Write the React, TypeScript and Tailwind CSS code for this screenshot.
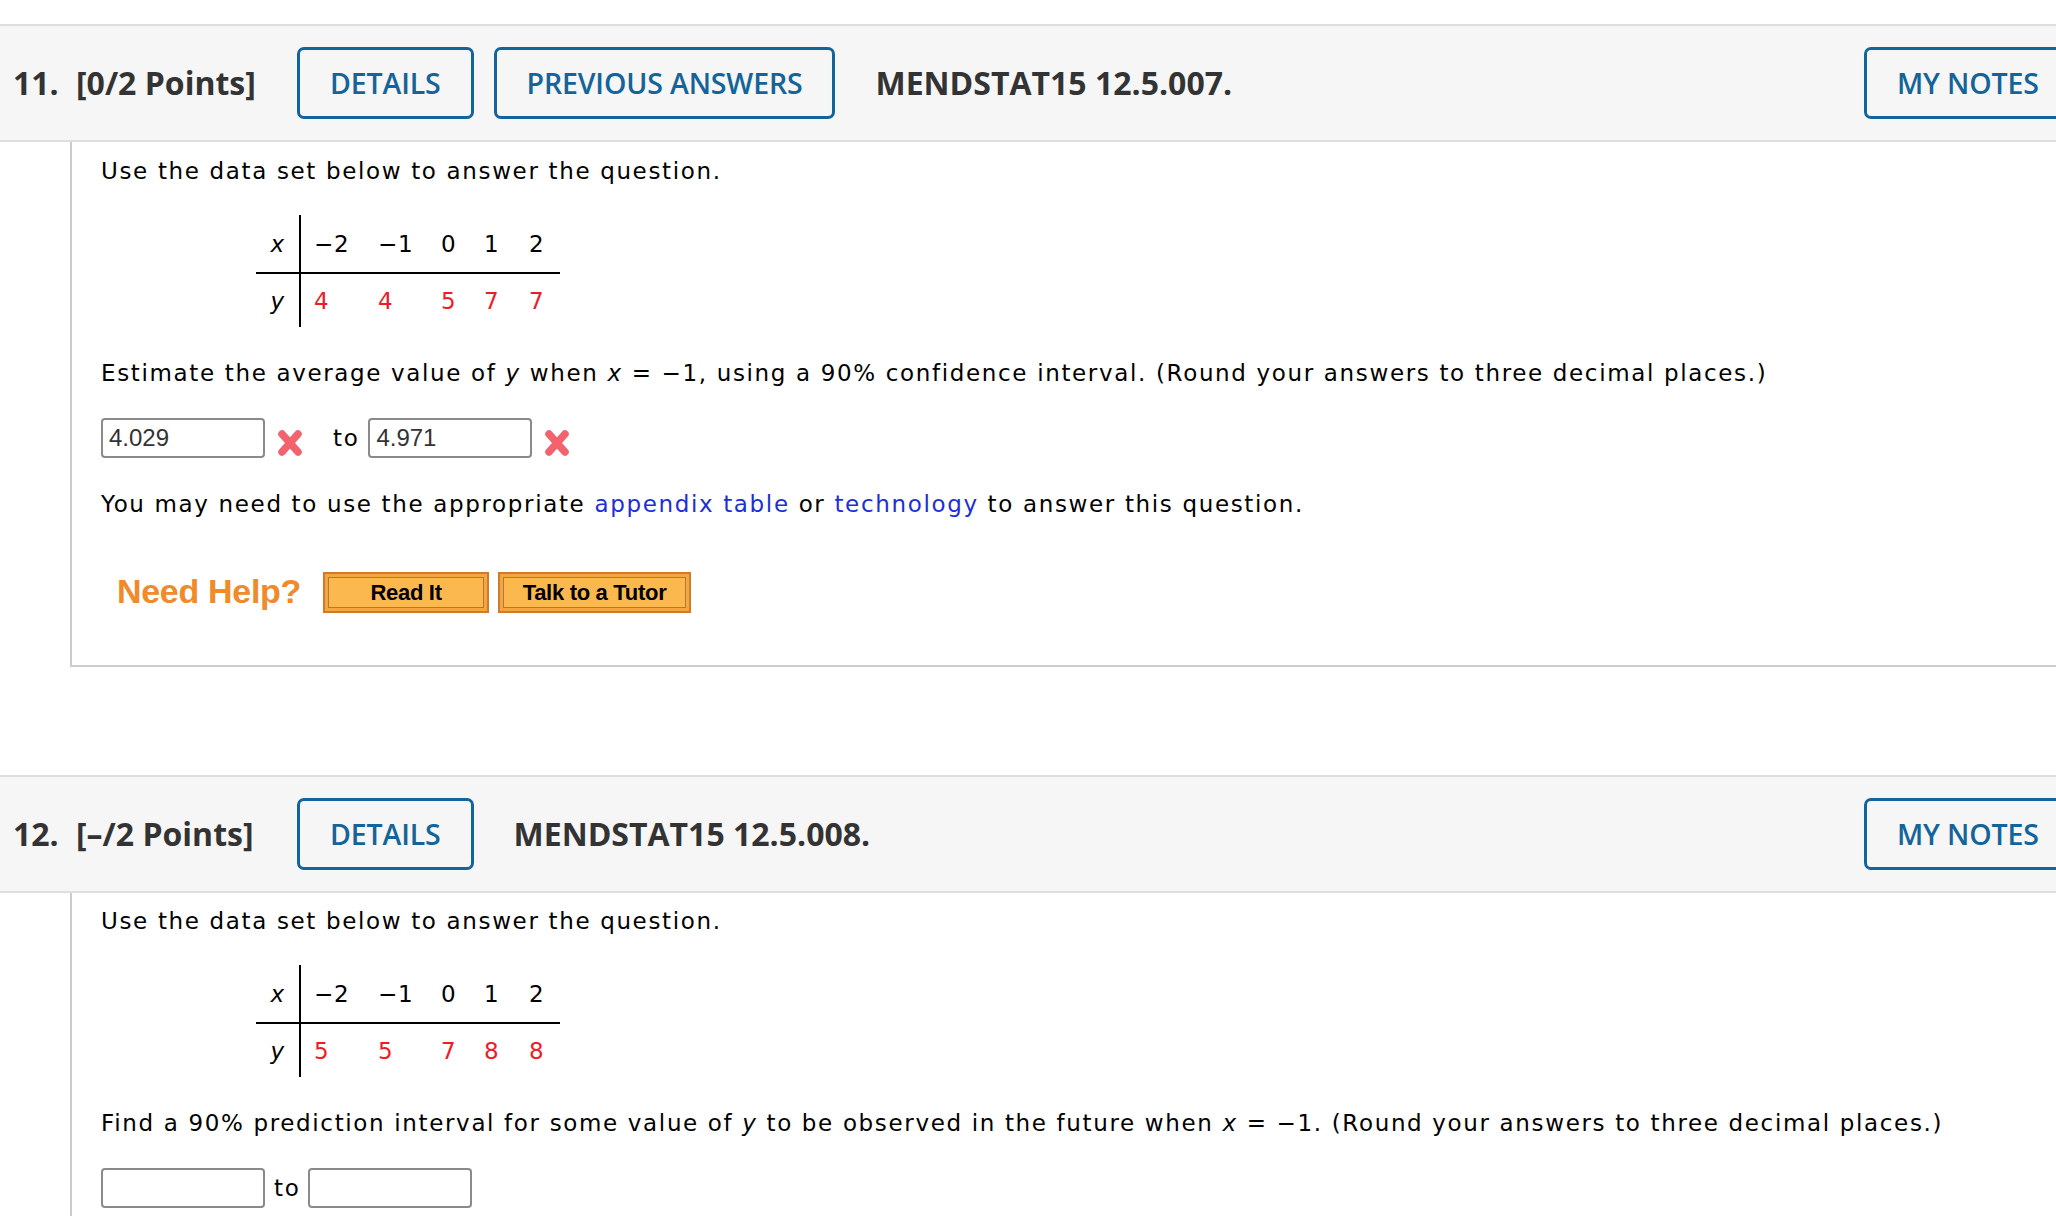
import React from "react";

const body = { fontFamily: '"DejaVu Sans", Verdana, sans-serif' };
const head = { fontFamily: '"Open Sans", "Liberation Sans", sans-serif' };
const arial = { fontFamily: '"Liberation Sans", Arial, sans-serif' };

function HeadButton({ children }: { children: React.ReactNode }) {
  return (
    <div
      className="h-[72px] px-[30px] flex items-center border-[3px] border-[#13649a] rounded-[7px] text-[#13649a] text-[28.5px] font-semibold tracking-[-0.15px] whitespace-nowrap"
      style={head}
    >
      {children}
    </div>
  );
}

function Header({ num, pts, prev, code }: { num: string; pts: string; prev: boolean; code: string }) {
  return (
    <div className="h-[118px] bg-[#f6f6f6] border-y-2 border-[#dedede] flex items-center pl-[13px]" style={head}>
      <span className="text-[32px] font-bold text-[#333] w-[63px]">{num}</span>
      <span className="text-[32px] font-bold text-[#333] w-[221px] whitespace-nowrap">{pts}</span>
      <HeadButton>DETAILS</HeadButton>
      {prev && (
        <div className="ml-[20px]">
          <HeadButton>PREVIOUS ANSWERS</HeadButton>
        </div>
      )}
      <span className="ml-[40px] text-[32px] font-bold text-[#333] whitespace-nowrap">{code}</span>
      <div className="ml-auto -mr-[40px] w-[232px]">
        <HeadButton>MY NOTES</HeadButton>
      </div>
    </div>
  );
}

function DataTable({ ys }: { ys: string[] }) {
  const xs = ["\u22122", "\u22121", "0", "1", "2"];
  const widths = ["w-[64px]", "w-[63px]", "w-[43px]", "w-[45px]", "w-[30px]"];
  return (
    <div className="ml-[155px] w-[304px] text-[23px] tracking-[0.8px] text-black" style={body}>
      <div className="flex h-[57px]">
        <div className="w-[43px] pr-[14px] flex items-center justify-end italic">x</div>
        <div className="flex-1 border-l-2 border-black flex items-center pl-[13px]">
          {xs.map((v, i) => (
            <span key={i} className={widths[i]}>{v}</span>
          ))}
        </div>
      </div>
      <div className="flex h-[55px] border-t-2 border-black">
        <div className="w-[43px] pr-[14px] flex items-center justify-end italic">y</div>
        <div className="flex-1 border-l-2 border-black flex items-center pl-[13px] text-[#ee1c25]">
          {ys.map((v, i) => (
            <span key={i} className={widths[i]}>{v}</span>
          ))}
        </div>
      </div>
    </div>
  );
}

function XMark() {
  return (
    <svg width="30" height="30" viewBox="0 0 30 30" className="mt-[10px]">
      <g stroke="#f2535e" strokeWidth="7.5" strokeLinecap="round" opacity="0.9">
        <line x1="7" y1="6" x2="23" y2="24" />
        <line x1="23" y1="6" x2="7" y2="24" />
      </g>
    </svg>
  );
}

function Input({ value }: { value?: string }) {
  return (
    <div
      className="w-[164px] h-[40px] border-2 border-[#8a8a8a] rounded-[4px] bg-white flex items-center pl-[6px] text-[24px] text-[#333] tracking-normal"
      style={arial}
    >
      {value}
    </div>
  );
}

function HelpButton({ label, w }: { label: string; w: string }) {
  return (
    <div className={`${w} h-[41px] border-2 border-[#d07a2c] bg-[#f6a640] p-[3px]`}>
      <div
        className="h-full border border-[#b9782f] bg-[#fbb84f] flex items-center justify-center text-[22px] font-bold text-black tracking-[-0.3px]"
        style={arial}
      >
        {label}
      </div>
    </div>
  );
}

export default function App() {
  return (
    <div className="w-[2056px] min-h-[1216px] bg-white overflow-hidden">
      <div className="h-[24px]" />
      <Header num="11." pts="[0/2 Points]" prev code="MENDSTAT15 12.5.007." />
      <div className="ml-[70px] border-l-2 border-b-2 border-[#cccccc] pl-[29px] pt-[14px] pb-[52px] text-[23px] tracking-[1.65px] leading-[30px] text-black" style={body}>
        <div>Use the data set below to answer the question.</div>
        <div className="mt-[29px]">
          <DataTable ys={["4", "4", "5", "7", "7"]} />
        </div>
        <div className="mt-[31px] whitespace-nowrap">
          Estimate the average value of <i>y</i> when <i>x</i> = {"\u2212"}1, using a 90% confidence interval. (Round your answers to three decimal places.)
        </div>
        <div className="mt-[30px] flex items-center h-[40px]">
          <Input value="4.029" />
          <div className="ml-[10px]"><XMark /></div>
          <span className="ml-[28px] mr-[9px]">to</span>
          <Input value="4.971" />
          <div className="ml-[10px]"><XMark /></div>
        </div>
        <div className="mt-[31px] whitespace-nowrap">
          You may need to use the appropriate <span className="text-[#1c2fd6]">appendix table</span> or <span className="text-[#1c2fd6]">technology</span> to answer this question.
        </div>
        <div className="mt-[53px] flex items-center h-[41px]">
          <span className="ml-[16px] text-[34px] font-bold text-[#f08a2a] tracking-[-0.3px] mt-[-3px]" style={arial}>Need Help?</span>
          <div className="ml-[22px]"><HelpButton label="Read It" w="w-[166px]" /></div>
          <div className="ml-[9px]"><HelpButton label="Talk to a Tutor" w="w-[193px]" /></div>
        </div>
      </div>
      <div className="h-[108px]" />
      <Header num="12." pts={"[\u2013/2 Points]"} prev={false} code="MENDSTAT15 12.5.008." />
      <div className="ml-[70px] border-l-2 border-[#cccccc] pl-[29px] pt-[13px] pb-[40px] text-[23px] tracking-[1.65px] leading-[30px] text-black" style={body}>
        <div>Use the data set below to answer the question.</div>
        <div className="mt-[29px]">
          <DataTable ys={["5", "5", "7", "8", "8"]} />
        </div>
        <div className="mt-[31px] whitespace-nowrap">
          Find a 90% prediction interval for some value of <i>y</i> to be observed in the future when <i>x</i> = {"\u2212"}1. (Round your answers to three decimal places.)
        </div>
        <div className="mt-[30px] flex items-center h-[40px]">
          <Input />
          <span className="ml-[9px] mr-[8px]">to</span>
          <Input />
        </div>
      </div>
    </div>
  );
}
